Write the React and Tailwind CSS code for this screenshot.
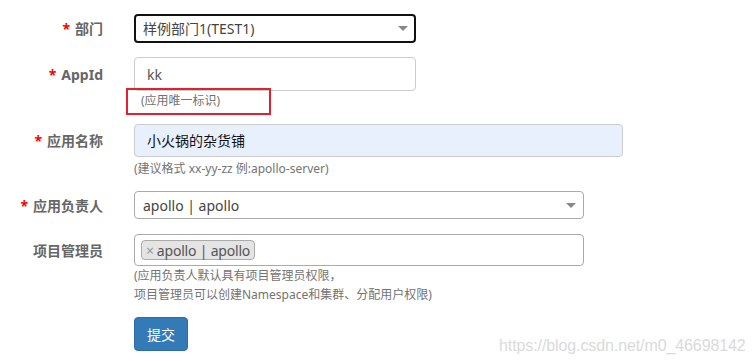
export default function App() {
  const font = { fontFamily: '"Noto Sans", "Noto Sans CJK SC", sans-serif' }

  const Label = ({ children, req, h }) => (
    <div className={`w-[134px] shrink-0 pr-[31px] flex items-center justify-end text-[14px] font-bold text-[#666] ${h}`}>
      {req && <span className="text-[#f00] mr-[5px]">*</span>}
      {children}
    </div>
  )

  const Caret = () => (
    <span className="w-0 h-0 border-l-[5px] border-r-[5px] border-t-[5px] border-l-transparent border-r-transparent border-t-[#888]" />
  )

  return (
    <div className="relative w-[756px] h-[361px] bg-white overflow-hidden text-[#333]" style={font}>
      <div className="pt-[14px]">
        {/* 部门 */}
        <div className="flex">
          <Label req h="h-[29px]">部门</Label>
          <div className="w-[282px] h-[29px] border-2 border-[#111] rounded-[4px] flex items-center justify-between pl-[7px] pr-[6px] text-[14px] text-[#444]">
            <span>样例部门1(TEST1)</span>
            <Caret />
          </div>
        </div>

        {/* AppId */}
        <div className="flex mt-[14px]">
          <Label req h="h-[34px]">AppId</Label>
          <div>
            <div className="w-[282px] h-[34px] border border-[#ccc] rounded-[4px] flex items-center pl-[12px] text-[14px] text-[#555]">
              kk
            </div>
            <div className="relative mt-[1px] leading-[17px] pl-[7px] text-[12px] text-[#737373]">
              (应用唯一标识)
              <span className="absolute left-[-8px] top-[-4px] w-[145px] h-[27px] border-2 border-[#e5202e]" />
            </div>
          </div>
        </div>

        {/* 应用名称 */}
        <div className="flex mt-[15px]">
          <Label req h="h-[33px]">应用名称</Label>
          <div>
            <div className="w-[489px] h-[33px] border border-[#ccc] bg-[#e8f0fe] rounded-[4px] flex items-center pl-[12px] text-[14px] text-[#111]">
              小火锅的杂货铺
            </div>
            <div className="mt-[3px] leading-[17px] text-[12px] text-[#737373]">
              (建议格式 xx-yy-zz 例:apollo-server)
            </div>
          </div>
        </div>

        {/* 应用负责人 */}
        <div className="flex mt-[14px]">
          <Label req h="h-[28px]">应用负责人</Label>
          <div className="w-[450px] h-[28px] border border-[#aaa] rounded-[4px] flex items-center justify-between pl-[8px] pr-[7px] text-[14px] text-[#444]">
            <span>apollo | apollo</span>
            <Caret />
          </div>
        </div>

        {/* 项目管理员 */}
        <div className="flex mt-[15px]">
          <Label h="h-[32px]">项目管理员</Label>
          <div>
            <div className="w-[450px] h-[32px] border border-[#aaa] rounded-[4px] flex items-center pl-[6px]">
              <span className="h-[20px] px-[4px] flex items-center bg-[#e4e4e4] border border-[#aaa] rounded-[4px] text-[14px] text-[#555] tracking-[-0.2px]">
                <span className="text-[#999] mr-[3px]">×</span>apollo | apollo
              </span>
            </div>
            <div className="leading-[19px] text-[12px] text-[#737373]">
              <div>(应用负责人默认具有项目管理员权限，</div>
              <div>项目管理员可以创建Namespace和集群、分配用户权限)</div>
            </div>
          </div>
        </div>

        {/* 提交 */}
        <div className="flex mt-[13px]">
          <div className="w-[134px] shrink-0" />
          <button className="w-[54px] h-[34px] bg-[#337ab7] border border-[#2e6da4] rounded-[4px] text-white text-[14px]">
            提交
          </button>
        </div>
      </div>

      <div
        className="absolute left-[499px] top-[334px] text-[16px] text-[#dadada] tracking-[-0.1px]"
        style={{ fontFamily: '"Liberation Sans", Arial, sans-serif' }}
      >
        https://blog.csdn.net/m0_46698142
      </div>
    </div>
  )
}
